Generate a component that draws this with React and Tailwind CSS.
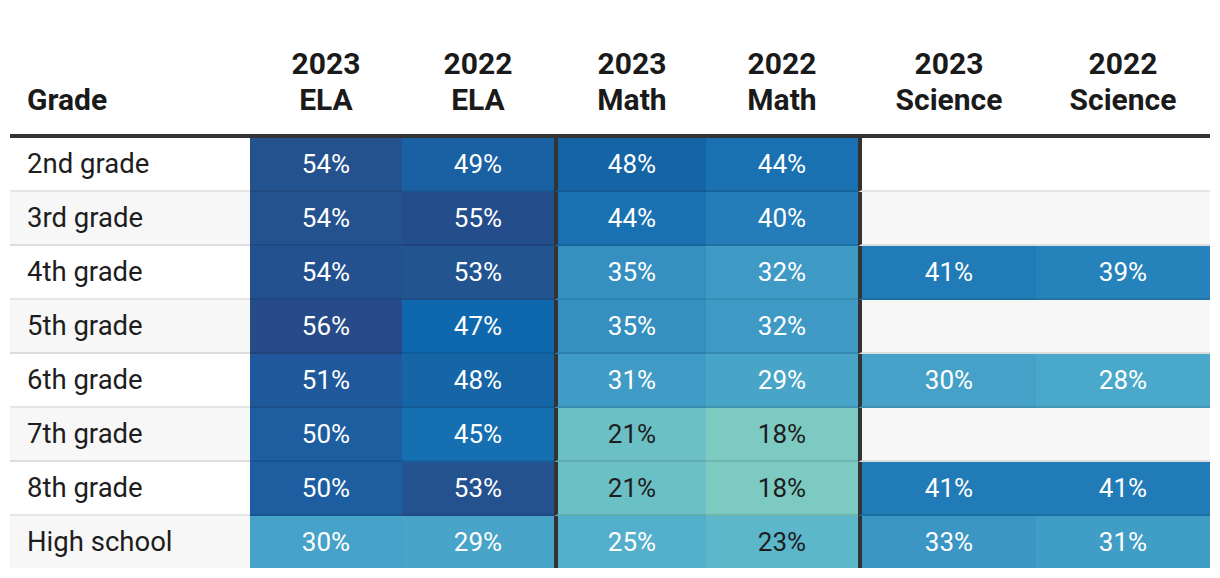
const cols = ['2023 ELA', '2022 ELA', '2023 Math', '2022 Math', '2023 Science', '2022 Science'];

// each cell: [value, bg class, dark text?]
const rows = [
  ['2nd grade', [
    ['54%', 'bg-[#23528f]'], ['49%', 'bg-[#1961a3]'],
    ['48%', 'bg-[#1564a6]'], ['44%', 'bg-[#1a71b1]'],
    null, null,
  ]],
  ['3rd grade', [
    ['54%', 'bg-[#23528f]'], ['55%', 'bg-[#244d8c]'],
    ['44%', 'bg-[#1a71b1]'], ['40%', 'bg-[#247db8]'],
    null, null,
  ]],
  ['4th grade', [
    ['54%', 'bg-[#235190]'], ['53%', 'bg-[#225490]'],
    ['35%', 'bg-[#3590c1]'], ['32%', 'bg-[#3e9ac5]'],
    ['41%', 'bg-[#207bb6]'], ['39%', 'bg-[#2682ba]'],
  ]],
  ['5th grade', [
    ['56%', 'bg-[#274a89]'], ['47%', 'bg-[#0f68ad]'],
    ['35%', 'bg-[#3590c1]'], ['32%', 'bg-[#3e9ac5]'],
    null, null,
  ]],
  ['6th grade', [
    ['51%', 'bg-[#1f589b]'], ['48%', 'bg-[#1665a7]'],
    ['31%', 'bg-[#409cc6]'], ['29%', 'bg-[#48a5c8]'],
    ['30%', 'bg-[#45a1c7]'], ['28%', 'bg-[#4aa8ca]'],
  ]],
  ['7th grade', [
    ['50%', 'bg-[#1c5ea0]'], ['45%', 'bg-[#156fb0]'],
    ['21%', 'bg-[#6bc0c6]', true], ['18%', 'bg-[#7dcac3]', true],
    null, null,
  ]],
  ['8th grade', [
    ['50%', 'bg-[#1c5ea0]'], ['53%', 'bg-[#23528f]'],
    ['21%', 'bg-[#6bc0c6]', true], ['18%', 'bg-[#7dcac3]', true],
    ['41%', 'bg-[#217bb6]'], ['41%', 'bg-[#217bb6]'],
  ]],
  ['High school', [
    ['30%', 'bg-[#46a2c8]'], ['29%', 'bg-[#48a4c8]'],
    ['25%', 'bg-[#53afcb]'], ['23%', 'bg-[#5db7cb]', true],
    ['33%', 'bg-[#3b96c4]'], ['31%', 'bg-[#409dc6]'],
  ]],
];

const grid = 'grid grid-cols-[240px_152px_152px_152px_152px_178px_174px]';

export default function App() {
  return (
    <div className="bg-white w-[1220px] h-[578px] overflow-hidden pt-[46px] px-[10px] font-['Roboto',sans-serif]">
      <div className={`${grid} items-end border-b-4 border-[#333333] pb-4 text-[30px] leading-[36px] font-bold text-[#1a1a1a]`}>
        <div className="pl-[17px]">Grade</div>
        {cols.map((c, i) => {
          const [year, subject] = c.split(' ');
          return (
            <div key={c} className={`text-center ${i === 2 || i === 4 ? 'pl-1' : ''}`}>
              {year}<br />{subject}
            </div>
          );
        })}
      </div>
      {rows.map(([grade, cells], r) => {
        const last = r === rows.length - 1;
        const rowBg = r % 2 === 0 ? 'bg-white' : 'bg-[#f7f7f7]';
        const sep = last ? '' : 'border-b-2 border-b-black/10';
        return (
          <div key={grade} className={`${grid} text-[26px]`}>
            <div className={`${last ? 'h-[52px]' : 'h-[54px]'} ${rowBg} ${sep} flex items-center pl-[17px] text-[27.5px] text-[#1d1d1d]`}>
              {grade}
            </div>
            {cells.map((cell, i) => {
              const divider = i === 2 || i === 4 ? 'border-l-4 border-l-[#333333]' : '';
              const bg = cell ? cell[1] : rowBg;
              const txt = cell && cell[2] ? 'text-[#1d1d1d]' : 'text-white';
              return (
                <div
                  key={i}
                  className={`${last ? 'h-[52px]' : 'h-[54px]'} ${bg} ${sep} ${divider} ${txt} flex items-center justify-center`}
                >
                  {cell ? cell[0] : ''}
                </div>
              );
            })}
          </div>
        );
      })}
    </div>
  );
}
